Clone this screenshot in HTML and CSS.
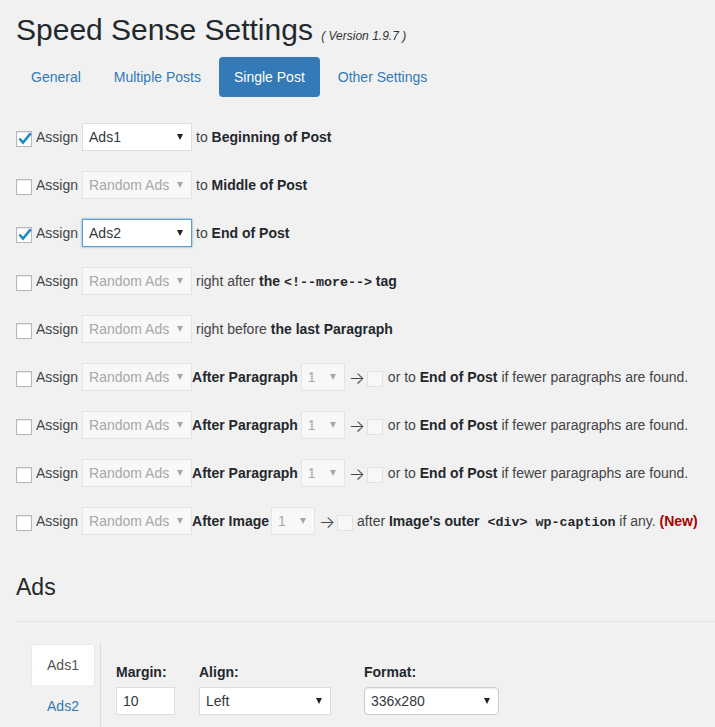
FILE: index.html
```html
<!DOCTYPE html>
<html>
<head>
<meta charset="utf-8">
<title>Speed Sense Settings</title>
<link rel="stylesheet" href="styles.css">
</head>
<body>
<div class="wrap">
  <h1 class="title">Speed Sense Settings <span class="version">( Version 1.9.7 )</span></h1>
  <ul class="tabs">
    <li><a href="#">General</a></li>
    <li><a href="#">Multiple Posts</a></li>
    <li><a href="#" class="active">Single Post</a></li>
    <li><a href="#">Other Settings</a></li>
  </ul>

  <div class="rows">
    <div class="row">
      <span class="cb"><svg class="check" viewBox="0 0 16 16"><path d="M3.2 8.2 L6.6 11.8 L13.8 3.2"/></svg></span>
      <span>Assign</span>
      <span class="sel"><span class="val">Ads1</span><i class="caret"></i></span>
      <span>to <b>Beginning of Post</b></span>
    </div>
    <div class="row">
      <span class="cb"></span>
      <span>Assign</span>
      <span class="sel dis"><span class="val">Random Ads</span><i class="caret"></i></span>
      <span>to <b>Middle of Post</b></span>
    </div>
    <div class="row">
      <span class="cb"><svg class="check" viewBox="0 0 16 16"><path d="M3.2 8.2 L6.6 11.8 L13.8 3.2"/></svg></span>
      <span>Assign</span>
      <span class="sel focus"><span class="val">Ads2</span><i class="caret"></i></span>
      <span>to <b>End of Post</b></span>
    </div>
    <div class="row">
      <span class="cb"></span>
      <span>Assign</span>
      <span class="sel dis"><span class="val">Random Ads</span><i class="caret"></i></span>
      <span>right after <b>the <code>&lt;!--more--&gt;</code> tag</b></span>
    </div>
    <div class="row">
      <span class="cb"></span>
      <span>Assign</span>
      <span class="sel dis"><span class="val">Random Ads</span><i class="caret"></i></span>
      <span>right before <b>the last Paragraph</b></span>
    </div>
    <div class="row">
      <span class="cb"></span>
      <span>Assign</span>
      <span class="sel dis"><span class="val">Random Ads</span><i class="caret"></i></span>
      <b class="flush">After Paragraph</b>
      <span class="sel dis small after-p"><span class="val">1</span><i class="caret"></i></span>
      <span class="arrow">→</span>
      <span class="cb dis"></span>
      <span class="tail">or to <b>End of Post</b> if fewer paragraphs are found.</span>
    </div>
    <div class="row">
      <span class="cb"></span>
      <span>Assign</span>
      <span class="sel dis"><span class="val">Random Ads</span><i class="caret"></i></span>
      <b class="flush">After Paragraph</b>
      <span class="sel dis small after-p"><span class="val">1</span><i class="caret"></i></span>
      <span class="arrow">→</span>
      <span class="cb dis"></span>
      <span class="tail">or to <b>End of Post</b> if fewer paragraphs are found.</span>
    </div>
    <div class="row">
      <span class="cb"></span>
      <span>Assign</span>
      <span class="sel dis"><span class="val">Random Ads</span><i class="caret"></i></span>
      <b class="flush">After Paragraph</b>
      <span class="sel dis small after-p"><span class="val">1</span><i class="caret"></i></span>
      <span class="arrow">→</span>
      <span class="cb dis"></span>
      <span class="tail">or to <b>End of Post</b> if fewer paragraphs are found.</span>
    </div>
    <div class="row">
      <span class="cb"></span>
      <span>Assign</span>
      <span class="sel dis"><span class="val">Random Ads</span><i class="caret"></i></span>
      <b class="flush">After Image</b>
      <span class="sel dis small after-i"><span class="val">1</span><i class="caret"></i></span>
      <span class="arrow">→</span>
      <span class="cb dis"></span>
      <span>after <b>Image's outer</b><code> &lt;div&gt; wp-caption</code> if any. <b class="new">(New)</b></span>
    </div>
  </div>

  <h2 class="section">Ads</h2>
  <hr class="rule">

  <div class="panel">
    <div class="adnav">
      <a href="#" class="adtab active">Ads1</a>
      <a href="#" class="adtab">Ads2</a>
    </div>
    <div class="adform">
      <div class="field f-margin">
        <label>Margin:</label>
        <span class="input">10</span>
      </div>
      <div class="field f-align">
        <label>Align:</label>
        <span class="sel wide"><span class="val">Left</span><i class="caret"></i></span>
      </div>
      <div class="field f-format">
        <label>Format:</label>
        <span class="sel wide rounded"><span class="val">336x280</span><i class="caret"></i></span>
      </div>
    </div>
  </div>
</div>
</body>
</html>
```

FILE: styles.css
```css
html, body {
  margin: 0;
  padding: 0;
}
body {
  background: #f1f1f1;
  font-family: "Liberation Sans", Arial, sans-serif;
  font-size: 14px;
  color: #444;
}
.wrap {
  padding-left: 16px;
}
b {
  color: #23282d;
  font-weight: 700;
}
.title {
  font-size: 30px;
  font-weight: 400;
  line-height: 36px;
  margin: 12px 0 0;
  color: #23282d;
}
.version {
  font-size: 12px;
  line-height: 12px;
  font-style: italic;
  color: #333;
}
.tabs {
  display: flex;
  gap: 3px;
  list-style: none;
  margin: 9px 0 0;
  padding: 0;
}
.tabs a {
  display: block;
  padding: 10px 15px;
  line-height: 20px;
  border-radius: 4px;
  color: #337ab7;
  text-decoration: none;
}
.tabs a.active {
  background: #337ab7;
  color: #fff;
}

.rows {
  margin-top: 26px;
}
.row {
  display: flex;
  align-items: center;
  gap: 4px;
  height: 28px;
  margin-bottom: 20px;
  white-space: nowrap;
}

.cb {
  box-sizing: border-box;
  width: 16px;
  height: 16px;
  margin-top: 4px;
  border: 1px solid #b4b9be;
  background: #fff;
  box-shadow: inset 0 1px 2px rgba(0, 0, 0, 0.1);
  position: relative;
  flex: none;
}
.cb.dis {
  background: #f7f7f7;
  border-color: #e2e2e2;
  box-shadow: none;
}
.check {
  position: absolute;
  left: -1px;
  top: -2px;
  width: 17px;
  height: 17px;
  overflow: visible;
}
.check path {
  fill: none;
  stroke: #1e8cbe;
  stroke-width: 2.4;
  stroke-linejoin: miter;
}

.sel {
  box-sizing: border-box;
  display: flex;
  align-items: center;
  justify-content: space-between;
  width: 110px;
  height: 28px;
  padding: 0 8px 0 6px;
  border: 1px solid #ddd;
  background: #fff;
  color: #32373c;
  flex: none;
}
.sel .caret {
  width: 0;
  height: 0;
  border-left: 3.5px solid transparent;
  border-right: 3.5px solid transparent;
  border-top: 6px solid #222;
}
.sel.dis {
  background: #f8f8f8;
  border-color: #e4e4e4;
  color: #a7a7a7;
}
.sel.dis .caret {
  border-top-color: #a7a7a7;
}
.sel.focus {
  border-color: #5b9dd9;
  box-shadow: 0 0 2px rgba(30, 140, 190, 0.8);
}
.sel.small {
  width: 44px;
}
.flush {
  margin-left: -4px;
}
.after-p {
  margin-left: -1px;
}
.after-i {
  margin-left: -2px;
}
.arrow {
  display: inline-block;
  width: 14px;
  font-family: "Inter", "DejaVu Sans", sans-serif;
  font-weight: 300;
  font-size: 17px;
  line-height: 16px;
  color: #444;
  text-align: center;
  margin-top: 2px;
}
.tail {
  margin-left: 1px;
}
code {
  font-family: "Liberation Mono", "Courier New", monospace;
  font-size: 13.33px;
  font-weight: 700;
  color: #23282d;
}
.new {
  color: #a00;
}

.section {
  font-size: 23px;
  font-weight: 400;
  line-height: 28px;
  margin: 38px 0 0;
  color: #23282d;
}
.rule {
  border: 0;
  border-top: 1px solid #e3e3e3;
  margin: 20px 0;
  height: 0;
}

.panel {
  display: flex;
  align-items: flex-start;
}
.adnav {
  padding: 2px 5px 0 15px;
  border-right: 1px solid #ddd;
  min-height: 90px;
}
.adtab {
  display: block;
  width: 32px;
  padding: 10px 15px;
  line-height: 20px;
  border: 1px solid transparent;
  border-bottom: 0;
  border-radius: 4px 4px 0 0;
  color: #337ab7;
  text-decoration: none;
  text-align: center;
}
.adtab.active {
  background: #fff;
  border-color: #e8e8e8;
  color: #555;
}
.adform {
  display: flex;
  padding: 20px 0 0 15px;
}
.field label {
  display: block;
  font-weight: 700;
  line-height: 20px;
  margin-bottom: 5px;
  color: #23282d;
}
.f-margin {
  margin-right: 24px;
}
.f-align {
  margin-right: 33px;
}
.input {
  box-sizing: border-box;
  display: flex;
  align-items: center;
  width: 59px;
  height: 28px;
  padding: 0 6px;
  border: 1px solid #ddd;
  background: #fff;
  color: #32373c;
}
.sel.wide {
  width: 132px;
}
.f-format .sel.wide {
  width: 135px;
}
.sel.rounded {
  border-color: #ccc;
  border-radius: 4px;
  box-shadow: inset 0 1px 1px rgba(0, 0, 0, 0.075);
}
```
